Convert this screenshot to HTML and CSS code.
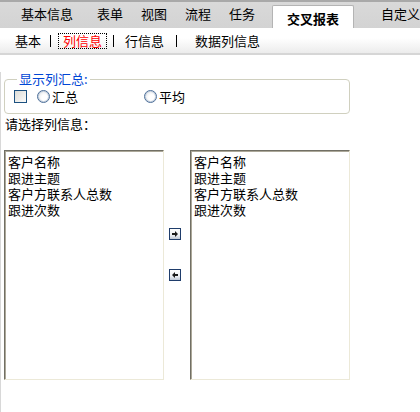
FILE: index.html
```html
<!DOCTYPE html>
<html>
<head>
<meta charset="utf-8">
<link rel="stylesheet" href="styles.css">
</head>
<body>
<div class="tabbar">
  <div class="tab first">基本信息</div><span class="sep"></span>
  <div class="tab">表单</div><span class="sep"></span>
  <div class="tab">视图</div><span class="sep"></span>
  <div class="tab">流程</div><span class="sep"></span>
  <div class="tab">任务</div><span class="sep"></span>
  <div class="tab active">交叉报表</div><span class="sep sep-after"></span>
  <div class="tab last">自定义</div>
</div>
<div class="subbar">
  <span class="sub s1">基本</span>
  <span class="bar b1"></span>
  <span class="sub current">列信息</span>
  <span class="bar b2"></span>
  <span class="sub s3">行信息</span>
  <span class="bar b3"></span>
  <span class="sub s4">数据列信息</span>
</div>
<div class="content">
  <fieldset class="group">
    <legend class="legend">显示列汇总:</legend>
    <div class="opts">
      <span class="check"></span>
      <span class="radio r1"></span><span class="olabel">汇总</span>
      <span class="radio r2"></span><span class="olabel">平均</span>
    </div>
  </fieldset>
  <div class="prompt">请选择列信息：</div>
  <div class="lists">
    <div class="listbox">
      <div class="item">客户名称</div>
      <div class="item">跟进主题</div>
      <div class="item">客户方联系人总数</div>
      <div class="item">跟进次数</div>
    </div>
    <div class="movers">
      <svg class="btn" width="12" height="12" viewBox="0 0 12 12">
        <defs><linearGradient id="g1" x1="0" y1="0" x2="0" y2="1"><stop offset="0" stop-color="#ffffff"/><stop offset="0.6" stop-color="#eef0f4"/><stop offset="1" stop-color="#b9c3d2"/></linearGradient></defs>
        <rect x="0.5" y="0.5" width="11" height="11" fill="url(#g1)" stroke="#1f3d6b"/>
        <path d="M3 5 H6 V3 L9 6 L6 9 V7 H3 Z" fill="#1a1a1a"/>
      </svg>
      <svg class="btn btn2" width="12" height="12" viewBox="0 0 12 12">
        <rect x="0.5" y="0.5" width="11" height="11" fill="url(#g1)" stroke="#1f3d6b"/>
        <path d="M9 5 H6 V3 L3 6 L6 9 V7 H9 Z" fill="#1a1a1a"/>
      </svg>
    </div>
    <div class="listbox">
      <div class="item">客户名称</div>
      <div class="item">跟进主题</div>
      <div class="item">客户方联系人总数</div>
      <div class="item">跟进次数</div>
    </div>
  </div>
</div>
</body>
</html>
```
FILE: styles.css
```css
html, body {
  margin: 0;
  padding: 0;
  background: #fff;
}
body {
  font-family: "Noto Sans CJK SC", "DejaVu Sans", sans-serif;
  font-size: 13px;
  color: #000;
  width: 420px;
  height: 412px;
  overflow: hidden;
}
.tabbar {
  display: flex;
  height: 26px;
  border-top: 2px solid #a9a9a9;
  background: linear-gradient(#d9d9d9, #d3d3d3);
  white-space: nowrap;
}
.tab {
  display: flex;
  align-items: center;
  padding: 0 9px;
  line-height: 14px;
  padding-bottom: 2px;
}
.tab.first {
  padding-left: 21px;
  padding-right: 15px;
}
.tab.active {
  margin-top: 3px;
  margin-left: 8px;
  margin-right: 7px;
  padding: 3px 14px 0;
  width: 52px;
  justify-content: center;
  background: #fff;
  border: 1px solid #b4b4b4;
  border-bottom: none;
  border-radius: 2px 2px 0 0;
  font-weight: bold;
}
.tab.last {
  padding-left: 20px;
}
.sep {
  align-self: center;
  width: 1px;
  height: 18px;
  background: #a8a8a8;
  box-shadow: 1px 0 0 #f2f2f2;
  margin-bottom: 2px;
}
.subbar {
  display: flex;
  align-items: center;
  height: 25px;
  padding-left: 15px;
  background: linear-gradient(#ffffff 40%, #ececec);
  border-bottom: 2px solid #d6d6d6;
  line-height: 14px;
  white-space: nowrap;
}
.bar {
  width: 1px;
  height: 12px;
  background: #000;
}
.s1 { margin-right: 9px; }
.b1 { margin-right: 7px; }
.current {
  color: #ff0000;
  border: 1px dotted #000;
  padding: 0 4px;
  margin-right: 6px;
}
.b2 { margin-right: 11px; }
.s3 { margin-right: 12px; }
.b3 { margin-right: 18px; }
.content {
  border-left: 1px solid #d8d8d8;
  padding-left: 3px;
  height: 355px;
}
.group {
  margin: 17px 0 0 0;
  width: 346px;
  box-sizing: border-box;
  border: 1px solid #d0d0bf;
  border-radius: 4px;
  padding: 4px 9px 10px;
}
.legend {
  color: #0046d5;
  font-size: 13px;
  line-height: 14px;
  padding: 0 2px;
  margin-left: 3px;
}
.opts {
  display: flex;
  align-items: center;
  height: 13px;
  line-height: 14px;
}
.check {
  width: 11px;
  height: 11px;
  border: 1px solid #1c5180;
  background: linear-gradient(135deg, #dcdcd7, #fbfbfa);
}
.radio {
  width: 11px;
  height: 11px;
  border: 1px solid #4d6f99;
  border-radius: 50%;
  background: radial-gradient(circle at 60% 60%, #ffffff 30%, #dfe2e6 90%);
  box-shadow: inset 0 0 0 1px #c7d2df;
  margin-right: 2px;
}
.r1 { margin-left: 10px; }
.r2 { margin-left: 66px; }
.prompt {
  margin-top: 3px;
  line-height: 14px;
  padding-left: 1px;
}
.lists {
  display: flex;
  margin-top: 19px;
}
.listbox {
  box-sizing: content-box;
  width: 155px;
  height: 225px;
  border-top: 1px solid #716f64;
  border-left: 1px solid #716f64;
  border-right: 1px solid #ece9d8;
  border-bottom: 1px solid #ece9d8;
  box-shadow: inset 1px 1px 0 #aca899;
  padding: 3px 0 0 3px;
}
.item {
  line-height: 16px;
  white-space: nowrap;
}
.movers {
  width: 26px;
  display: flex;
  flex-direction: column;
  align-items: flex-start;
  padding-left: 5px;
  box-sizing: border-box;
}
.btn {
  display: block;
  margin-top: 78px;
}
.btn2 {
  margin-top: 29px;
}
```
